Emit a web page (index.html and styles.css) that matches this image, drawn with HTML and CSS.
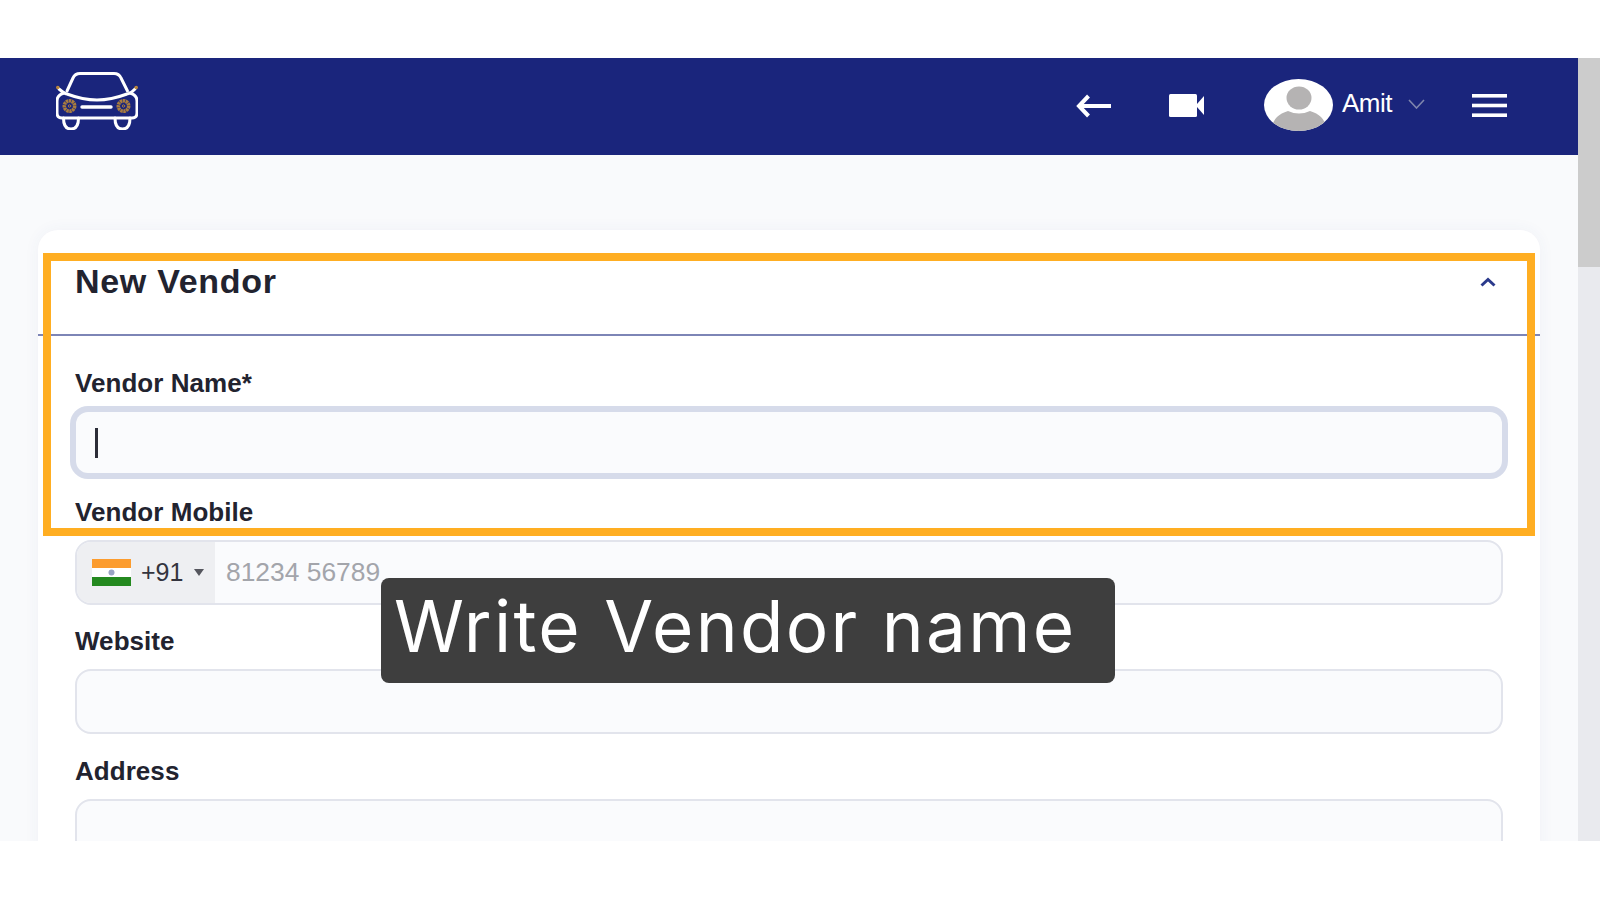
FILE: index.html
```html
<!DOCTYPE html>
<html lang="en">
<head>
    <meta charset="UTF-8">
    <meta name="viewport" content="width=device-width, initial-scale=1.0">
    <title>New Vendor</title>
    <link rel="stylesheet" href="styles.css">
</head>
<body>
  <div class="viewport">
    <div class="page">
      <header class="topbar">
        <svg class="logo" width="82" height="58" viewBox="0 0 82 58" fill="none" stroke="#fff" stroke-width="3" stroke-linecap="round" stroke-linejoin="round">
          <path d="M11 19 L17 6 Q19 1.5 24 1.5 L58 1.5 Q63 1.5 65 6 L71.5 19"/>
          <path d="M3 17 Q9 22 11 22 Q27 28 41 28 Q55 28 71 22 Q74 22 79 17"/>
          <path d="M8 21 Q1 23 1 29 L1 41 Q1 46 6 46 L76 46 Q81 46 81 41 L81 29 Q81 23 74 21"/>
          <path d="M7.5 46 Q7.5 57 15 57 Q22.5 57 22.5 46"/>
          <path d="M59 46 Q59 57 66.5 57 Q74 57 74 46"/>
          <path d="M26 35 H55" stroke-width="3.4"/>
          <circle cx="13.5" cy="34" r="5.2" stroke="#a87c3f" stroke-width="3.6" stroke-dasharray="2.4 .5" stroke-linecap="butt"/>
          <circle cx="67.5" cy="34" r="5.2" stroke="#a87c3f" stroke-width="3.6" stroke-dasharray="2.4 .5" stroke-linecap="butt"/>
          <circle cx="13.5" cy="34" r="1.2" stroke="#a87c3f" stroke-width="1"/>
          <circle cx="67.5" cy="34" r="1.2" stroke="#a87c3f" stroke-width="1"/>
          <circle cx="1.8" cy="15.5" r=".8" stroke="#c08a3a" stroke-width="2"/>
          <circle cx="80.2" cy="15.5" r=".8" stroke="#c08a3a" stroke-width="2"/>
        </svg>
        <div class="topbar-actions">
          <svg class="icon-back" width="35" height="24" viewBox="0 0 35 24" fill="none" stroke="#fff" stroke-width="4" stroke-linejoin="miter">
            <path d="M35 12 H3"/>
            <path d="M12.5 2 L3 12 L12.5 22"/>
          </svg>
          <svg class="icon-video" width="35" height="23" viewBox="0 0 35 23" fill="#fff">
            <rect x="0" y="0" width="28" height="23" rx="1.5"/>
            <path d="M28 10 L35 2 V21 L28 13 Z"/>
          </svg>
          <svg class="avatar" width="69" height="52" viewBox="0 0 69 52">
            <defs>
              <clipPath id="avatar-clip"><ellipse cx="34.5" cy="26" rx="34.5" ry="26"/></clipPath>
            </defs>
            <ellipse cx="34.5" cy="26" rx="34.5" ry="26" fill="#fff"/>
            <g clip-path="url(#avatar-clip)" fill="#b5b3b3">
              <ellipse cx="35" cy="19" rx="12.5" ry="11.5"/>
              <path d="M8 48 Q10 36 24 32 Q35 37 46 32 Q60 36 62 48 L62 52 L8 52 Z"/>
            </g>
          </svg>
          <span class="user-name">Amit</span>
          <svg class="icon-caret" width="17" height="10" viewBox="0 0 17 10" fill="none" stroke="#7f86ad" stroke-width="1.6">
            <path d="M1 1 L8.5 9 L16 1"/>
          </svg>
          <svg class="icon-menu" width="35" height="23" viewBox="0 0 35 23" fill="#fff">
            <rect y="0" width="35" height="3.6"/>
            <rect y="9.7" width="35" height="3.6"/>
            <rect y="19.4" width="35" height="3.6"/>
          </svg>
        </div>
      </header>

      <section class="card">
        <div class="card-head">
          <h2>New Vendor</h2>
          <svg class="icon-collapse" width="16" height="10" viewBox="0 0 16 10" fill="none" stroke="#2b3a8c" stroke-width="3">
            <path d="M1.5 8.5 L8 2.5 L14.5 8.5"/>
          </svg>
        </div>
        <form class="card-body">
          <div class="field">
            <label>Vendor Name*</label>
            <div class="input is-focused"><span class="caret"></span></div>
          </div>
          <div class="field">
            <label>Vendor Mobile</label>
            <div class="input phone">
              <div class="dial">
                <svg class="flag" width="39" height="27" viewBox="0 0 39 27">
                  <rect width="39" height="9" fill="#fc9c2e"/>
                  <rect y="9" width="39" height="9" fill="#fff"/>
                  <rect y="18" width="39" height="9" fill="#24891f"/>
                  <circle cx="19.5" cy="13.5" r="3" fill="#9aa3c4"/>
                </svg>
                <span class="dial-code">+91</span>
                <span class="dial-arrow"></span>
              </div>
              <span class="placeholder">81234 56789</span>
            </div>
          </div>
          <div class="field">
            <label>Website</label>
            <div class="input"></div>
          </div>
          <div class="field">
            <label>Address</label>
            <div class="input"></div>
          </div>
        </form>
      </section>
    </div>

    <div class="scrollbar"><div class="scrollbar-thumb"></div></div>

    <div class="highlight"></div>
    <div class="hint">Write Vendor name</div>
  </div>
</body>
</html>
```

FILE: styles.css
```css
body {
    font-family: 'Liberation Sans', Arial, sans-serif;
    background-color: #fff;
    color: #22232f;
    margin: 0;
    padding: 58px 0 0;
    height: 900px;
    box-sizing: border-box;
    overflow: hidden;
}
.viewport {
    position: relative;
    display: flex;
    height: 783px;
    overflow: hidden;
}
.page {
    flex: 1;
    background: #f9fafc;
    min-width: 0;
}
.topbar {
    display: flex;
    justify-content: space-between;
    height: 97px;
    background: #1a257c;
    color: #fff;
}
.logo {
    margin: 14px 0 0 56px;
}
.topbar-actions {
    display: flex;
    align-items: center;
    padding: 0 71px 2px 0;
}
.icon-video {
    margin-left: 58px;
}
.avatar {
    margin: 0 0 1px 60px;
}
.user-name {
    font-size: 26px;
    letter-spacing: -0.5px;
    margin: 0 0 4px 9px;
}
.icon-caret {
    margin: 0 0 3px 16px;
}
.icon-menu {
    margin-left: 47px;
}
.card {
    margin: 75px 38px 0;
    background: #fff;
    border-radius: 20px;
    box-shadow: 0 0 16px rgba(60, 70, 130, 0.05);
}
.card-head {
    display: flex;
    justify-content: space-between;
    height: 104px;
    padding: 0 44px 0 37px;
    border-bottom: 2px solid #7d85b6;
}
.card-head h2 {
    margin: 32px 0 0;
    font-size: 34px;
    line-height: 38px;
    letter-spacing: 0.7px;
}
.icon-collapse {
    margin-top: 47px;
}
.card-body {
    padding: 32px 37px 0;
}
.field {
    margin-bottom: 21.5px;
}
.field:first-child {
    margin-bottom: 23.5px;
}
.field label {
    display: block;
    font-size: 26px;
    font-weight: 700;
    line-height: 30px;
    letter-spacing: 0.05px;
    margin-bottom: 13px;
}
.input {
    display: flex;
    align-items: center;
    height: 65px;
    box-sizing: border-box;
    background: #fafbfd;
    border: 2px solid #e2e4ec;
    border-radius: 16px;
    overflow: hidden;
}
.input.is-focused {
    height: 61px;
    margin: 14px 1px 0;
    border: none;
    box-shadow: 0 0 0 6px #d6dbea;
    border-radius: 12px;
    overflow: visible;
}
.field:first-child label {
    margin-bottom: 0;
}
.caret {
    width: 3px;
    height: 30px;
    margin-left: 19px;
    background: #2c2d38;
}
.dial {
    display: flex;
    align-items: center;
    align-self: stretch;
    width: 138px;
    padding-left: 15px;
    box-sizing: border-box;
    background: #eeeff2;
}
.dial-code {
    font-size: 25px;
    margin-left: 10px;
    color: #33343e;
}
.dial-arrow {
    width: 0;
    height: 0;
    margin-left: 11px;
    border-left: 5px solid transparent;
    border-right: 5px solid transparent;
    border-top: 7px solid #55565e;
}
.placeholder {
    font-size: 26.4px;
    margin-left: 11px;
    color: #a3a5ab;
}
.scrollbar {
    width: 22px;
    background: #e9eaee;
}
.scrollbar-thumb {
    height: 209px;
    background: #cccccc;
}
/* tutorial overlay */
.highlight {
    position: absolute;
    left: 43px;
    top: 195px;
    width: 1492px;
    height: 283px;
    box-sizing: border-box;
    border: 8px solid #ffae22;
}
.hint {
    position: absolute;
    left: 381px;
    top: 520px;
    display: flex;
    align-items: center;
    width: 734px;
    height: 105px;
    padding: 0 0 10px 13px;
    box-sizing: border-box;
    background: #3e3e3e;
    border-radius: 8px;
    color: #fff;
    font-family: 'Inter', sans-serif;
    font-size: 71px;
    letter-spacing: 2.3px;
    white-space: nowrap;
}
```
